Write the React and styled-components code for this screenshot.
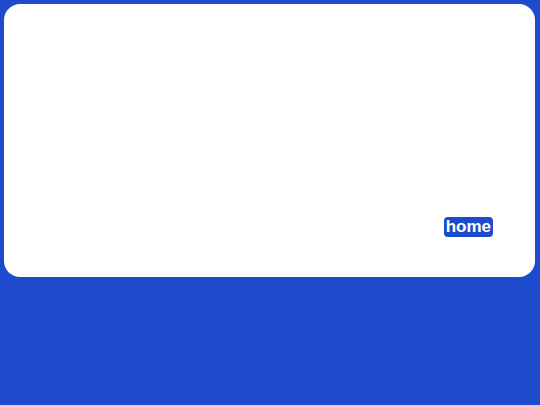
import React from "react";
import styled, { createGlobalStyle } from "styled-components";

const Global = createGlobalStyle`
  html, body { margin: 0; padding: 0; background: #1d4bcc; }
  body { font-family: "Liberation Sans", Arial, sans-serif; }
`;

const Page = styled.div`
  padding: 4px 5px 0 4px;
  width: 540px;
  height: 405px;
  box-sizing: border-box;
`;

const Card = styled.div`
  background: #ffffff;
  border-radius: 16px;
  height: 273px;
  box-sizing: border-box;
  display: flex;
  align-items: flex-end;
  justify-content: flex-end;
  padding: 0 42px 40px 0;
`;

const Badge = styled.span`
  background: #1d4bcc;
  color: #ffffff;
  font-weight: bold;
  font-size: 17px;
  line-height: 20px;
  padding: 0 2px;
  border-radius: 4px;
`;

export default function App() {
  return (
    <>
      <Global />
      <Page>
        <Card>
          <Badge>home</Badge>
        </Card>
      </Page>
    </>
  );
}
